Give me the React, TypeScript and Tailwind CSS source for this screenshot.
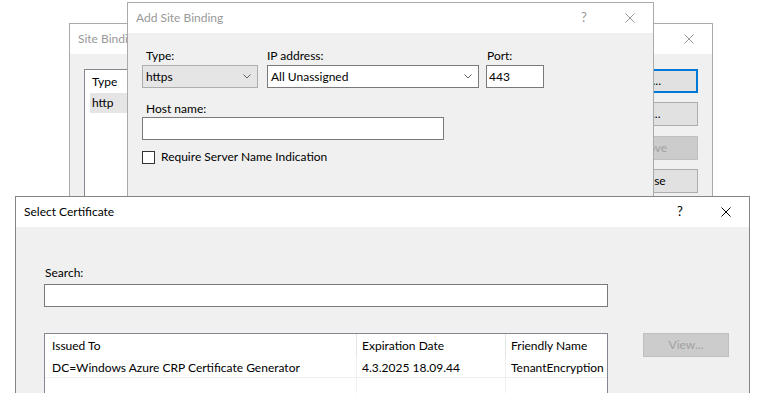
import React from "react";

const CloseIcon = ({ color }: { color: string }) => (
  <svg width="10" height="10" viewBox="0 0 10 10">
    <path d="M0.5 0.5L9.5 9.5M9.5 0.5L0.5 9.5" stroke={color} strokeWidth="1" fill="none" />
  </svg>
);

const Chevron = () => (
  <svg width="8" height="5" viewBox="0 0 8 5">
    <path d="M0.5 0.5L4 4L7.5 0.5" stroke="#606060" strokeWidth="1" fill="none" />
  </svg>
);

const TitleBar = ({ title, active, help }: any) => {
  const color = active ? "text-black" : "text-[#999999]";
  return (
    <div className="flex h-[30px] shrink-0 items-center bg-white">
      <span className={`pl-[8px] ${color}`}>{title}</span>
      <div className="ml-auto flex h-full">
        {help && (
          <div className={`flex h-full w-[46px] items-center justify-center text-[13px] ${color}`}>?</div>
        )}
        <div className="flex h-full w-[46px] items-center justify-center">
          <CloseIcon color={active ? "#000000" : "#999999"} />
        </div>
      </div>
    </div>
  );
};

const Btn = ({ children, primary, disabled, className }: any) => (
  <div
    className={`flex h-[24px] items-center justify-center ${
      disabled
        ? "border border-[#bfbfbf] bg-[#cccccc] text-[#a0a0a0]"
        : primary
        ? "border-2 border-[#0078d7] bg-[#e1e1e1]"
        : "border border-[#adadad] bg-[#e1e1e1]"
    } ${className || ""}`}
  >
    {children}
  </div>
);

export default function App() {
  return (
    <div className="relative h-[393px] w-[771px] overflow-hidden bg-white font-['Lato',sans-serif] text-[12px] text-black">
      {/* Site Bindings (behind) */}
      <div className="absolute left-[69px] top-[23px] flex h-[400px] w-[644px] flex-col border border-[#aaaaaa] bg-[#f0f0f0]">
        <TitleBar title="Site Bindings" active={false} help={false} />
        <div className="flex gap-[12px] px-[14px] pt-[15px]">
          <div className="h-[280px] flex-1 border border-[#828790] bg-white">
            <div className="flex h-[23px] items-center pl-[7px]">Type</div>
            <div className="mx-[5px] flex h-[20px] items-center bg-[#e5e5e5] pl-[2px]">http</div>
          </div>
          <div className="flex w-[104px] flex-col">
            <Btn primary>Add...</Btn>
            <Btn className="mt-[9px]">Edit...</Btn>
            <Btn disabled className="mt-[10px]">Remove</Btn>
            <Btn className="mt-[9px]">Browse</Btn>
          </div>
        </div>
      </div>

      {/* Add Site Binding */}
      <div className="absolute left-[127px] top-[2px] flex h-[260px] w-[527px] flex-col border border-[#aaaaaa] bg-[#f0f0f0]">
        <TitleBar title="Add Site Binding" active={false} help />
        <div className="flex flex-col pl-[14px] pt-[15px]">
          <div className="flex">
            <div className="flex w-[116px] flex-col">
              <div className="h-[15px] pl-[4px] leading-[15px]">Type:</div>
              <div className="mt-[2px] flex h-[23px] items-center justify-between border border-[#adadad] bg-[#e5e5e5] pl-[3px] pr-[6px]">
                <span>https</span>
                <Chevron />
              </div>
            </div>
            <div className="ml-[9px] flex w-[212px] flex-col">
              <div className="h-[15px] leading-[15px]">IP address:</div>
              <div className="mt-[2px] flex h-[23px] items-center justify-between border border-[#7a7a7a] bg-white pl-[3px] pr-[6px]">
                <span>All Unassigned</span>
                <Chevron />
              </div>
            </div>
            <div className="ml-[7px] flex w-[58px] flex-col">
              <div className="h-[15px] pl-[1px] leading-[15px]">Port:</div>
              <div className="mt-[2px] flex h-[23px] items-center border border-[#7a7a7a] bg-white pl-[2px]">443</div>
            </div>
          </div>
          <div className="mt-[13px] h-[15px] pl-[4px] leading-[15px]">Host name:</div>
          <div className="mt-[1px] h-[23px] w-[302px] border border-[#7a7a7a] bg-white" />
          <div className="mt-[8px] flex items-center">
            <div className="h-[13px] w-[13px] border border-[#333333] bg-white" />
            <span className="ml-[6px]">Require Server Name Indication</span>
          </div>
        </div>
      </div>

      {/* Select Certificate (front) */}
      <div className="absolute left-[15px] top-[196px] flex h-[240px] w-[735px] flex-col border border-[#858585] bg-[#f0f0f0]">
        <TitleBar title="Select Certificate" active help />
        <div className="flex flex-col pl-[28px] pt-[38px]">
          <div className="h-[15px] pl-[1px] leading-[15px]">Search:</div>
          <div className="mt-[4px] h-[23px] w-[564px] border border-[#7a7a7a] bg-white" />
          <div className="mt-[26px] flex items-start gap-[35px]">
            <div className="h-[100px] w-[564px] overflow-hidden border border-[#828790] bg-white">
              <div className="flex h-[24px]">
                <div className="flex w-[312px] items-center border-r border-[#e5e5e5] pl-[7px]">Issued To</div>
                <div className="flex w-[149px] items-center border-r border-[#e5e5e5] pl-[5px]">Expiration Date</div>
                <div className="flex flex-1 items-center pl-[5px]">Friendly Name</div>
              </div>
              <div className="flex h-[20px] border-b border-[#f0f0f0]">
                <div className="flex w-[312px] items-center border-r border-[#f0f0f0] pl-[7px]">
                  DC=Windows Azure CRP Certificate Generator
                </div>
                <div className="flex w-[149px] items-center border-r border-[#f0f0f0] pl-[5px]">4.3.2025 18.09.44</div>
                <div className="flex flex-1 items-center overflow-hidden whitespace-nowrap pl-[5px]">TenantEncryption</div>
              </div>
              <div className="flex h-[20px]">
                <div className="w-[312px] border-r border-[#f0f0f0]" />
                <div className="w-[149px] border-r border-[#f0f0f0]" />
              </div>
            </div>
            <Btn disabled className="w-[86px]">View...</Btn>
          </div>
        </div>
      </div>
    </div>
  );
}
